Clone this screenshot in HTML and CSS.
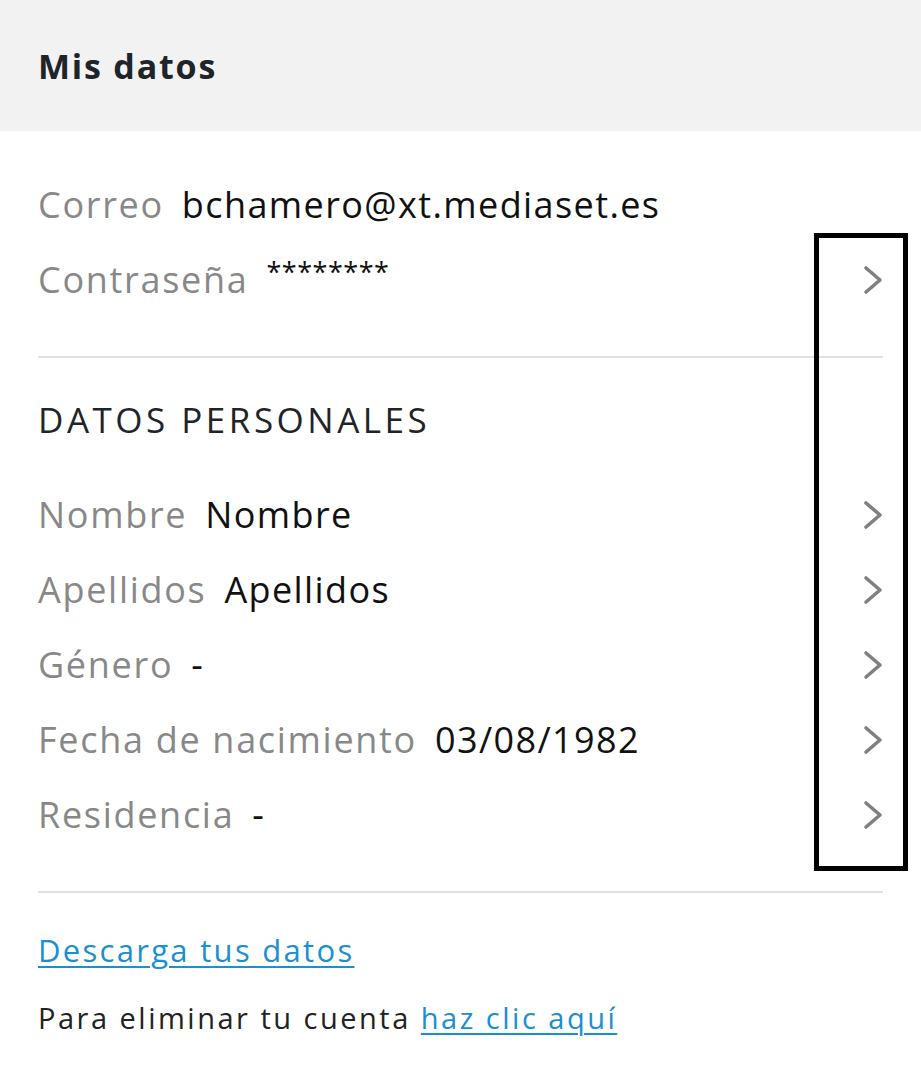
FILE: index.html
```html
<!DOCTYPE html>
<html lang="es">
<head>
<meta charset="utf-8">
<title>Mis datos</title>
<link rel="stylesheet" href="styles.css">
</head>
<body>
<header class="topbar">
  <h1 class="title">Mis datos</h1>
</header>
<main class="content">
  <section class="group">
    <div class="row"><span class="label">Correo</span><span class="value">bchamero@xt.mediaset.es</span></div>
    <div class="row"><span class="label">Contraseña</span><span class="value stars">********</span>
      <svg class="chev" viewBox="0 0 20 30" width="20" height="30"><path d="M3 3 L17 15 L3 27" fill="none" stroke="#808080" stroke-width="3.6" stroke-linecap="round" stroke-linejoin="round"/></svg>
    </div>
  </section>
  <hr class="divider">
  <h2 class="section-title">DATOS PERSONALES</h2>
  <section class="group personal">
    <div class="row"><span class="label">Nombre</span><span class="value">Nombre</span>
      <svg class="chev" viewBox="0 0 20 30" width="20" height="30"><path d="M3 3 L17 15 L3 27" fill="none" stroke="#808080" stroke-width="3.6" stroke-linecap="round" stroke-linejoin="round"/></svg>
    </div>
    <div class="row"><span class="label">Apellidos</span><span class="value">Apellidos</span>
      <svg class="chev" viewBox="0 0 20 30" width="20" height="30"><path d="M3 3 L17 15 L3 27" fill="none" stroke="#808080" stroke-width="3.6" stroke-linecap="round" stroke-linejoin="round"/></svg>
    </div>
    <div class="row"><span class="label">Género</span><span class="value">-</span>
      <svg class="chev" viewBox="0 0 20 30" width="20" height="30"><path d="M3 3 L17 15 L3 27" fill="none" stroke="#808080" stroke-width="3.6" stroke-linecap="round" stroke-linejoin="round"/></svg>
    </div>
    <div class="row"><span class="label">Fecha de nacimiento</span><span class="value">03/08/1982</span>
      <svg class="chev" viewBox="0 0 20 30" width="20" height="30"><path d="M3 3 L17 15 L3 27" fill="none" stroke="#808080" stroke-width="3.6" stroke-linecap="round" stroke-linejoin="round"/></svg>
    </div>
    <div class="row"><span class="label">Residencia</span><span class="value">-</span>
      <svg class="chev" viewBox="0 0 20 30" width="20" height="30"><path d="M3 3 L17 15 L3 27" fill="none" stroke="#808080" stroke-width="3.6" stroke-linecap="round" stroke-linejoin="round"/></svg>
    </div>
  </section>
  <hr class="divider">
  <p class="download"><a href="#" class="link">Descarga tus datos</a></p>
  <p class="delete">Para eliminar tu cuenta <a href="#" class="link">haz clic aquí</a></p>
</main>
<div class="highlight"></div>
</body>
</html>
```
FILE: styles.css
```css
html, body {
  margin: 0;
  padding: 0;
  background: #ffffff;
}
body {
  font-family: "Open Sans", "DejaVu Sans", sans-serif;
  position: relative;
  min-height: 1073px;
}
.topbar {
  height: 131px;
  background: #f2f2f2;
  display: flex;
  align-items: center;
  padding: 0 38px;
  box-sizing: border-box;
}
.title {
  margin: 0;
  font-size: 34px;
  font-weight: 700;
  letter-spacing: 1.8px;
  color: #1f2429;
  line-height: 40px;
}
.content {
  padding: 36px 38px 0;
}
.group {
  display: flex;
  flex-direction: column;
}
.row {
  display: flex;
  align-items: center;
  height: 75px;
  line-height: 75px;
  font-size: 36px;
}
.label {
  color: #888888;
  letter-spacing: 1.7px;
  margin-right: 18px;
}
.value {
  color: #111111;
  letter-spacing: 1.4px;
}
.stars {
  font-size: 27px;
  letter-spacing: 0.5px;
  align-self: flex-start;
  line-height: 60px;
}
.chev {
  margin-left: auto;
  flex: none;
}
.divider {
  border: 0;
  height: 2px;
  background: #e0e0e0;
  margin: 39px 0 0;
}
.section-title {
  margin: 37px 0 32px;
  font-size: 35px;
  font-weight: 400;
  letter-spacing: 3.5px;
  color: #1f2429;
  line-height: 50px;
}
.download {
  margin: 37px 0 0;
  font-size: 31px;
  letter-spacing: 2.3px;
  line-height: 40px;
}
.delete {
  margin: 28px 0 0;
  font-size: 29px;
  letter-spacing: 2.5px;
  line-height: 40px;
  color: #222222;
}
.link {
  color: #1a8fd3;
  text-decoration: underline;
  text-underline-offset: 4px;
  text-decoration-thickness: 2px;
}
.highlight {
  position: absolute;
  left: 814px;
  top: 233px;
  width: 94px;
  height: 638px;
  box-sizing: border-box;
  border: 5px solid #000000;
}
```
